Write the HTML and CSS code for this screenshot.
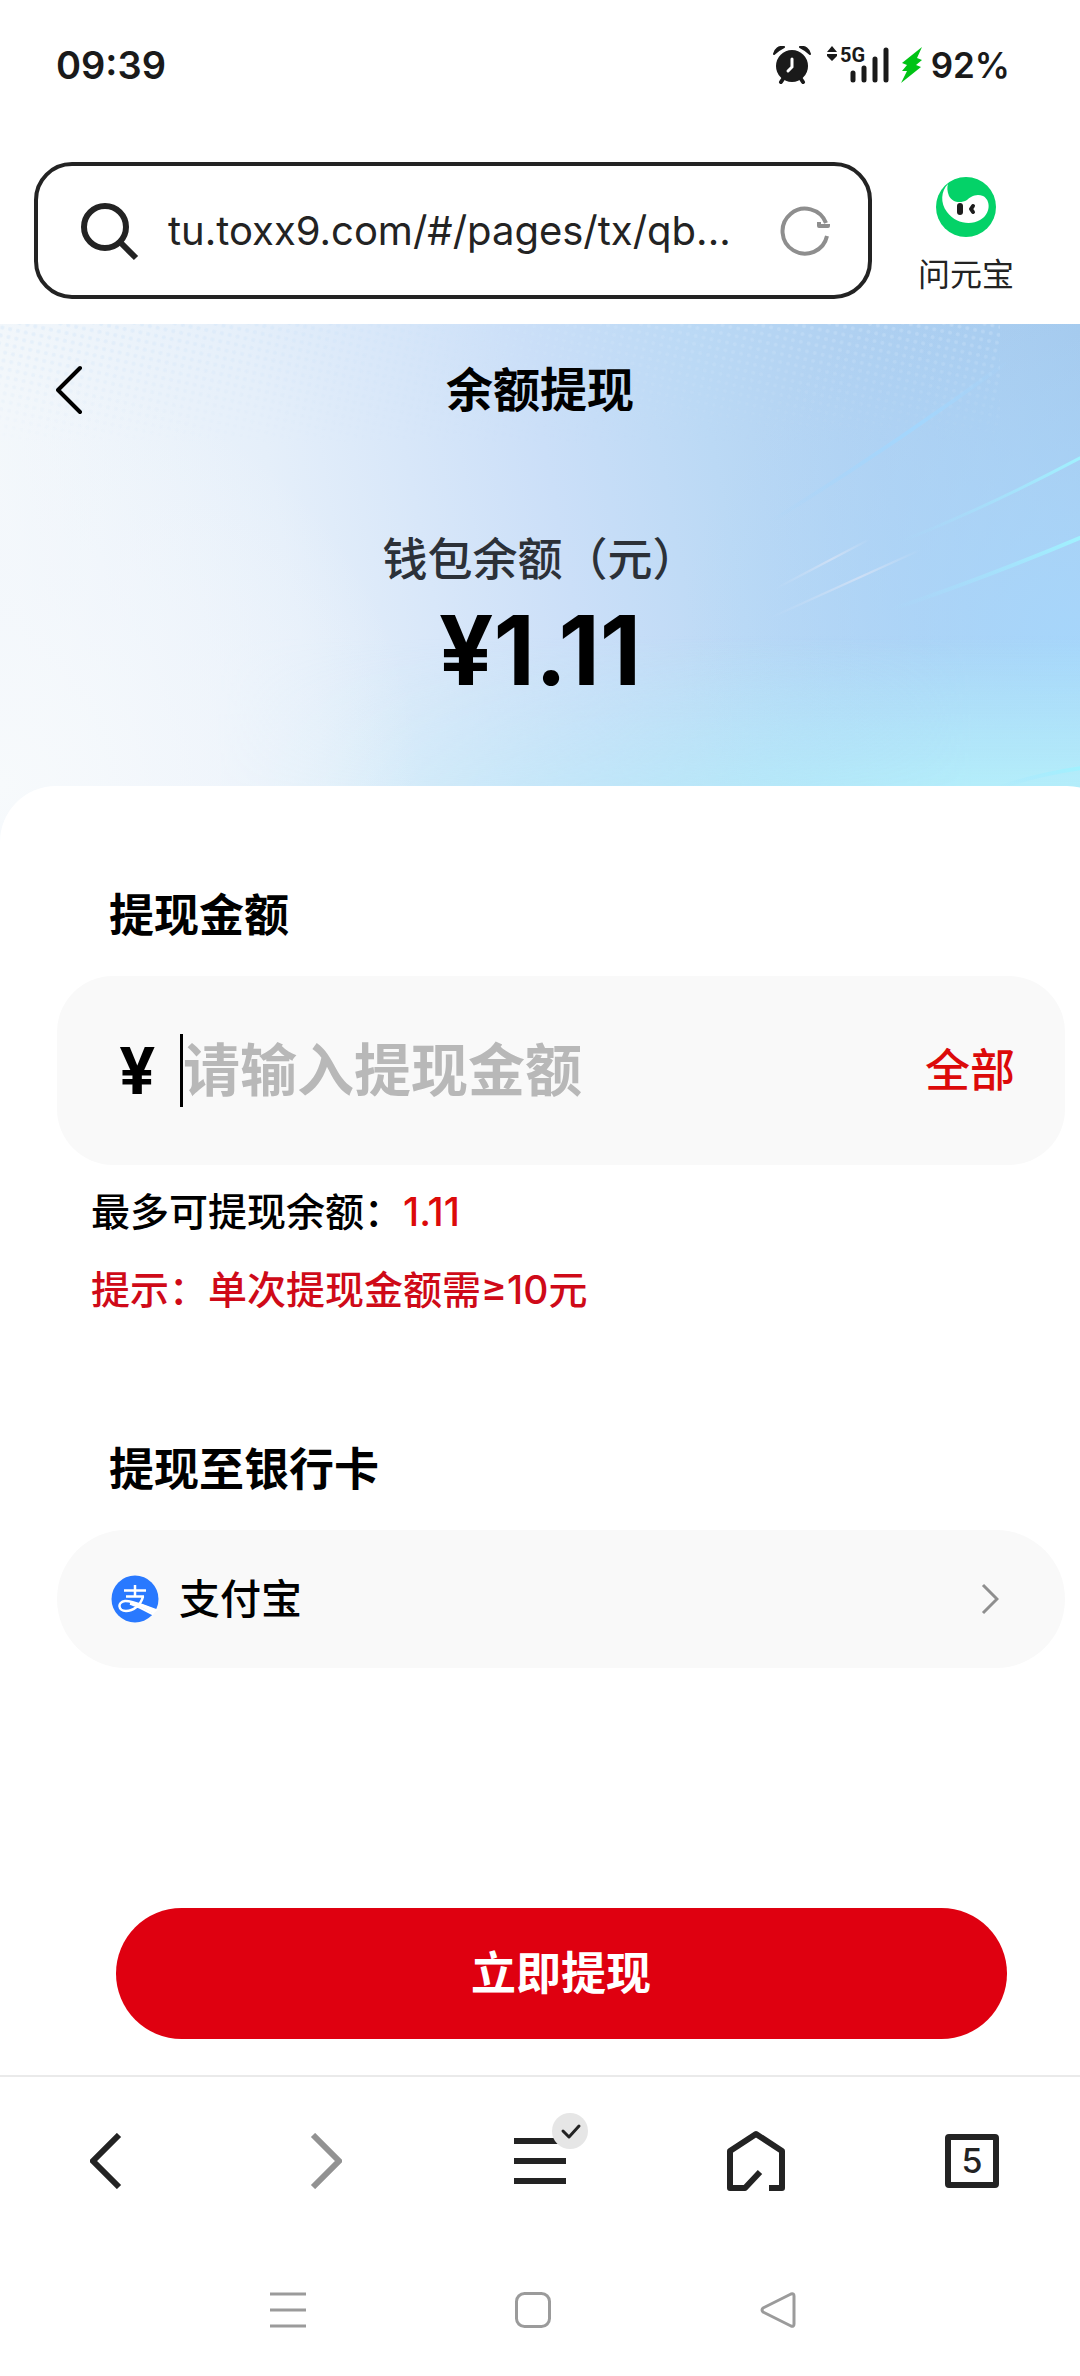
FILE: index.html
```
<!DOCTYPE html>
<html lang="zh-CN">
<head>
    <meta charset="UTF-8">
    <meta name="viewport" content="width=device-width, initial-scale=1.0">
    <title>余额提现</title>
    <link rel="stylesheet" href="styles.css">
</head>
<body>
    <div class="status-bar">
        <span class="time">09:39</span>
        <div class="status-icons">
            <svg class="alarm" width="38" height="38" viewBox="0 0 38 38">
                <circle cx="19" cy="20" r="16" fill="#1a1a1a"/>
                <path d="M1 8C2 3 6 0 11 1C7 3 4 5 1 8ZM37 8C36 3 32 0 27 1C31 3 34 5 37 8Z" fill="#1a1a1a" stroke="#1a1a1a" stroke-width="2" stroke-linejoin="round"/>
                <path d="M10 33L8 36M28 33L30 36" stroke="#1a1a1a" stroke-width="4" stroke-linecap="round"/>
                <path d="M19 13V21L15 25" fill="none" stroke="#fff" stroke-width="3" stroke-linecap="round"/>
            </svg>
            <svg class="signal" width="62" height="46" viewBox="0 -4 62 46">
                <path d="M0 6L5 0L10 6ZM0 8H10V10L5 15L0 10Z" fill="#1a1a1a"/>
                <text x="13" y="16" class="signal-text">5G</text>
                <path d="M26 27V34M37 22V34M48 13V34M59 4V34" stroke="#1a1a1a" stroke-width="5" stroke-linecap="round"/>
            </svg>
            <svg class="bolt" width="22" height="36" viewBox="0 0 22 36">
                <path d="M21 0L1 16L6 18L1 24H6L0 36L20 20L15 18L21 13L16 11Z" fill="#00c315"/>
            </svg>
            <span class="battery">92%</span>
        </div>
    </div>

    <div class="address-row">
        <div class="address-box">
            <svg width="60" height="60" viewBox="0 0 60 60" fill="none" stroke="#232323" stroke-width="6">
                <circle cx="25" cy="26" r="21"/>
                <path d="M40 41L56 57"/>
            </svg>
            <a class="url" href="#">tu.toxx9.com/#/pages/tx/qb...</a>
            <button class="icon-button" type="button" aria-label="刷新">
                <svg width="50" height="50" viewBox="0 0 50 50" fill="none" stroke="#8e8e8e" stroke-width="4">
                    <path d="M47 30A22.500 22.500 0 1 1 46 17"/>
                    <path d="M48 18V20H39V16" stroke-linejoin="round"/>
                </svg>
            </button>
        </div>
        <a class="assistant" href="#">
            <svg width="60" height="60" viewBox="0 0 60 60">
                <circle cx="30" cy="30" r="30" fill="#04d268"/>
                <path d="M12 7C5 14 4 26 11 35C19 46 34 49 44 43C55 37 55 23 47 19C40 16 34 20 31 23C24 27 16 25 13 19C11 14 11 10 12 7Z" fill="#fff"/>
                <rect x="21" y="26" width="6" height="12" rx="3" fill="#1d1d1d"/>
                <path d="M37 29L35 32L37 35" fill="none" stroke="#1d1d1d" stroke-width="4" stroke-linecap="round" stroke-linejoin="round"/>
            </svg>
            <span>问元宝</span>
        </a>
    </div>

    <main class="page">
        <svg class="page-bg" viewBox="0 0 1080 520" preserveAspectRatio="none">
            <defs>
                <linearGradient id="base" gradientUnits="userSpaceOnUse" x1="0" y1="200" x2="1080" y2="0">
                    <stop offset="0" stop-color="#f4f8fb"/>
                    <stop offset="0.25" stop-color="#e5effa"/>
                    <stop offset="0.5" stop-color="#cbdff8"/>
                    <stop offset="0.65" stop-color="#bbd9f5"/>
                    <stop offset="0.8" stop-color="#afd0f1"/>
                    <stop offset="1" stop-color="#a3c8ec"/>
                </linearGradient>
                <linearGradient id="cyan" x1="0" y1="0" x2="0" y2="1">
                    <stop offset="0.6" stop-color="#b4eefa" stop-opacity="0"/>
                    <stop offset="0.9" stop-color="#b4eefa"/>
                </linearGradient>
                <linearGradient id="cyan-side" x1="0" y1="0" x2="1" y2="0">
                    <stop offset="0.2" stop-color="#fff" stop-opacity="0"/>
                    <stop offset="0.5" stop-color="#fff" stop-opacity="0.4"/>
                    <stop offset="0.9" stop-color="#fff"/>
                </linearGradient>
                <mask id="cyan-mask">
                    <rect width="1080" height="520" fill="url(#cyan-side)"/>
                </mask>
                <radialGradient id="blue" gradientUnits="userSpaceOnUse" cx="1080" cy="330" r="400">
                    <stop offset="0" stop-color="#a6d6fb"/>
                    <stop offset="1" stop-color="#b0d8fb" stop-opacity="0"/>
                </radialGradient>
                <radialGradient id="pale" gradientUnits="userSpaceOnUse" cx="0" cy="460" r="420">
                    <stop offset="0" stop-color="#f7fafc"/>
                    <stop offset="0.5" stop-color="#f3f7fc" stop-opacity="0.6"/>
                    <stop offset="1" stop-color="#f3f7fc" stop-opacity="0"/>
                </radialGradient>
                <linearGradient id="ray" x1="0" y1="1" x2="1" y2="0">
                    <stop offset="0" stop-color="#a4e4ff" stop-opacity="0"/>
                    <stop offset="1" stop-color="#a0f2ff"/>
                </linearGradient>
                <linearGradient id="ray-mid" x1="0" y1="1" x2="1" y2="0">
                    <stop offset="0" stop-color="#a3d6fd" stop-opacity="0"/>
                    <stop offset="0.6" stop-color="#a3d6fd"/>
                    <stop offset="1" stop-color="#a3d6fd" stop-opacity="0"/>
                </linearGradient>
                <linearGradient id="ray-white" x1="0" y1="1" x2="1" y2="0">
                    <stop offset="0" stop-color="#cddff5" stop-opacity="0"/>
                    <stop offset="0.6" stop-color="#cddff5"/>
                    <stop offset="1" stop-color="#cddff5" stop-opacity="0"/>
                </linearGradient>
                <pattern id="dots" width="8" height="8" patternUnits="userSpaceOnUse" patternTransform="rotate(12)">
                    <circle cx="3" cy="3" r="2" fill="#cfe4f9"/>
                </pattern>
                <linearGradient id="fade" x1="0" y1="0" x2="0" y2="1">
                    <stop offset="0" stop-color="#fff" stop-opacity="0.4"/>
                    <stop offset="1" stop-color="#fff" stop-opacity="0"/>
                </linearGradient>
                <mask id="dots-mask">
                    <rect width="1000" height="120" fill="url(#fade)"/>
                </mask>
            </defs>
            <rect width="1080" height="520" fill="url(#base)"/>
            <rect width="1080" height="520" fill="url(#blue)"/>
            <rect width="1080" height="520" fill="url(#cyan)" mask="url(#cyan-mask)"/>
            <rect width="1080" height="520" fill="url(#pale)"/>
            <rect width="1080" height="160" fill="url(#dots)" mask="url(#dots-mask)"/>
            <g fill="none">
                <path d="M770 198Q890 124 1010 36" stroke="url(#ray-mid)" stroke-width="4"/>
                <path d="M900 218Q990 182 1082 133" stroke="url(#ray)" stroke-width="3"/>
                <path d="M890 286Q990 252 1082 213" stroke="url(#ray)" stroke-width="4"/>
                <path d="M1000 463Q1040 450 1082 444" stroke="url(#ray)" stroke-width="4"/>
                <path d="M775 265L870 215" stroke="url(#ray-white)" stroke-width="2"/>
                <path d="M770 294L920 226" stroke="url(#ray-white)" stroke-width="2"/>
            </g>
        </svg>

        <header class="title-bar">
            <a class="back" href="#" aria-label="返回">
                <svg width="28" height="50" viewBox="0 0 28 50" fill="none" stroke="#000" stroke-width="4" stroke-linecap="round" stroke-linejoin="round">
                    <path d="M24 3L2 25L24 47"/>
                </svg>
            </a>
            <h1>余额提现</h1>
        </header>

        <section class="balance">
            <p class="balance-label">钱包余额（元）</p>
            <p class="balance-value">¥1.11</p>
        </section>

        <form class="card">
            <h2><label for="amount">提现金额</label></h2>
            <div class="field amount-field">
                <span class="currency">¥</span>
                <input id="amount" type="text" inputmode="decimal" placeholder="请输入提现金额">
                <button class="all-button" type="button">全部</button>
            </div>
            <div class="hints">
                <p>最多可提现余额：<span class="max">1.11</span></p>
                <p class="warning">提示：单次提现金额需≥10元</p>
            </div>

            <h2>提现至银行卡</h2>
            <button class="field account-field" type="button">
                <svg width="48" height="48" viewBox="0 0 48 48">
                    <circle cx="24" cy="24" r="23.500" fill="#2979ff"/>
                    <path d="M13 15.500H35M24 10V21.500M15 21.500H33" fill="none" stroke="#fff" stroke-width="2.500"/>
                    <path d="M32 21.500C30 30 22 36 15 36C7 36 6 27 14 26C23 25.500 32 32 48 37L44 40C34 36 28 31 19 28.500" fill="none" stroke="#fff" stroke-width="2.500"/>
                    <path d="M29 28L48 35L43 39L28 31Z" fill="#fff"/>
                    <path d="M43 38L48 34V42H41Z" fill="#f9f9f9"/>
                </svg>
                <span class="account-name">支付宝</span>
                <svg width="18" height="32" viewBox="0 0 18 32" fill="none" stroke="#8f8f8f" stroke-width="3">
                    <path d="M2 2L16 16L2 30"/>
                </svg>
            </button>

            <button class="submit" type="submit">立即提现</button>
        </form>
    </main>

    <nav class="browser-nav">
        <a href="#" aria-label="后退">
            <svg width="36" height="56" viewBox="0 0 36 56" fill="none" stroke="#232323" stroke-width="6">
                <path d="M29 2L3 28L29 54"/>
            </svg>
        </a>
        <a href="#" aria-label="前进">
            <svg width="36" height="56" viewBox="0 0 36 56" fill="none" stroke="#929292" stroke-width="6">
                <path d="M7 2L33 28L7 54"/>
            </svg>
        </a>
        <a href="#" aria-label="菜单">
            <span class="menu-icon">
                <svg width="52" height="46" viewBox="0 0 52 46" stroke="#232323" stroke-width="6">
                    <path d="M0 3H52M0 23H52M0 43H52"/>
                </svg>
                <svg class="badge" width="36" height="36" viewBox="0 0 36 36">
                    <circle cx="18" cy="18" r="18" fill="#e6e6e6"/>
                    <path d="M11 18L17 24L27 13" fill="none" stroke="#232323" stroke-width="3" stroke-linecap="round" stroke-linejoin="round"/>
                </svg>
            </span>
        </a>
        <a href="#" aria-label="主页">
            <svg width="58" height="62" viewBox="0 0 58 62" fill="none" stroke="#232323" stroke-width="6" stroke-linejoin="round">
                <path d="M42 58H55V21L29 4L3 21V58H18L33 42"/>
            </svg>
        </a>
        <a href="#" aria-label="标签页">
            <span class="tab-count">5</span>
        </a>
    </nav>

    <div class="system-bar">
        <button class="icon-button" type="button" aria-label="最近任务">
            <svg width="36" height="36" viewBox="0 0 36 36" stroke="#9b9b9b" stroke-width="3">
                <path d="M0 2H36M0 18H36M0 34H36"/>
            </svg>
        </button>
        <button class="icon-button" type="button" aria-label="桌面">
            <svg width="36" height="36" viewBox="0 0 36 36" fill="none" stroke="#9b9b9b" stroke-width="3">
                <rect x="1.500" y="1.500" width="33" height="33" rx="8"/>
            </svg>
        </button>
        <button class="icon-button" type="button" aria-label="返回">
            <svg width="36" height="36" viewBox="0 0 36 36" fill="none" stroke="#9b9b9b" stroke-width="3" stroke-linejoin="round">
                <path d="M31 2L3 16Q1 18 3 20L31 34Q34 35 34 32V4Q34 1 31 2Z"/>
            </svg>
        </button>
    </div>
</body>
</html>
```

FILE: styles.css
```
* {
    box-sizing: border-box;
}
body {
    margin: 0;
    background: #fff;
    color: #000;
    font-family: Inter, "Noto Sans CJK SC", sans-serif;
    overflow-x: hidden;
}
h1, h2, p {
    margin: 0;
}
a {
    color: inherit;
    text-decoration: none;
}
button, input {
    border: 0;
    padding: 0;
    background: none;
    color: inherit;
    font-family: inherit;
}
svg {
    display: block;
    flex-shrink: 0;
}
.icon-button {
    display: block;
}

/* status bar */
.status-bar {
    display: flex;
    justify-content: space-between;
    align-items: center;
    height: 130px;
    padding: 0 70px 0 56px;
    color: #1a1a1a;
}
.time {
    font-size: 38px;
    font-weight: 600;
}
.status-icons {
    display: flex;
    align-items: center;
}
.signal {
    margin-left: 16px;
}
.signal-text {
    font-family: Roboto, sans-serif;
    font-size: 20px;
    font-weight: 700;
    fill: #1a1a1a;
}
.bolt {
    margin: 0 8px 0 12px;
}
.battery {
    font-size: 35px;
    font-weight: 600;
}

/* address row */
.address-row {
    display: flex;
    align-items: center;
    padding: 32px 20px 25px 34px;
}
.address-box {
    display: flex;
    flex: 1;
    align-items: center;
    height: 137px;
    padding: 0 38px 0 42px;
    border: 4px solid #232323;
    border-radius: 38px;
}
.url {
    flex: 1;
    margin-left: 28px;
    font-size: 40px;
    color: #232323;
    white-space: nowrap;
}
.assistant {
    display: flex;
    flex-direction: column;
    align-items: center;
    width: 188px;
    padding-top: 14px;
    font-size: 32px;
    line-height: 48px;
    color: #232323;
}
.assistant svg {
    margin-bottom: 14px;
}

/* page */
.page {
    position: relative;
    overflow: hidden;
}
.page-bg {
    position: absolute;
    top: 0;
    left: 0;
    z-index: -1;
    width: 100%;
    height: 520px;
}
.title-bar {
    display: grid;
    grid-template-columns: 1fr auto 1fr;
    align-items: center;
    height: 132px;
    padding: 0 56px;
}
.title-bar h1 {
    font-size: 47px;
    font-weight: 700;
    line-height: 60px;
}
.back {
    justify-self: start;
}
.balance {
    padding: 74px 0 86px;
    text-align: center;
}
.balance-label {
    font-size: 45px;
    font-weight: 500;
    line-height: 60px;
    color: #2c3138;
}
.balance-value {
    margin-top: 10px;
    font-size: 96px;
    font-weight: 700;
    line-height: 100px;
}

/* card runs past the right edge of the screen */
.card {
    width: calc(100% + 43px);
    padding: 100px 58px 36px 57px;
    border-radius: 56px 56px 0 0;
    background: #fff;
}
.card h2 {
    padding-left: 52px;
    font-size: 45px;
    font-weight: 700;
    line-height: 60px;
}
.field {
    display: flex;
    align-items: center;
    width: 100%;
    margin-top: 30px;
    background: #f9f9f9;
}
.amount-field {
    height: 189px;
    padding: 0 50px 0 62px;
    border-radius: 56px;
}
.currency {
    width: 61px;
    font-size: 64px;
    font-weight: 700;
    line-height: 72px;
}
.amount-field input {
    flex: 1;
    min-width: 0;
    height: 73px;
    border-left: 3px solid #000;
    font-size: 57px;
    font-weight: 700;
    line-height: 72px;
    outline: 0;
}
.amount-field input::placeholder {
    color: #b8b8b8;
}
.all-button {
    font-size: 45px;
    font-weight: 500;
    line-height: 60px;
    color: #dc0a0a;
}
.hints {
    margin: 8px 0 111px;
    padding-left: 34px;
    font-size: 39px;
    font-weight: 500;
    line-height: 78px;
}
.max {
    color: #dc0a0a;
}
.warning {
    color: #cf0a18;
}
.account-field {
    height: 138px;
    padding: 0 66px 0 54px;
    border-radius: 69px;
}
.account-name {
    flex: 1;
    margin-left: 20px;
    font-size: 41px;
    font-weight: 500;
    line-height: 60px;
    text-align: left;
}
.submit {
    display: block;
    width: calc(100% - 117px);
    height: 131px;
    margin: 240px auto 0;
    border-radius: 66px;
    background: #df0010;
    color: #fff;
    font-size: 45px;
    font-weight: 700;
    line-height: 60px;
}

/* browser nav */
.browser-nav {
    display: grid;
    grid-template-columns: repeat(5, 1fr);
    place-items: center;
    height: 169px;
    border-top: 2px solid #eaeaea;
}
.menu-icon {
    display: block;
    position: relative;
}
.badge {
    position: absolute;
    top: -25px;
    right: -22px;
}
.tab-count {
    display: flex;
    justify-content: center;
    align-items: center;
    width: 54px;
    height: 54px;
    border: 6px solid #232323;
    border-radius: 4px;
    font-size: 34px;
    font-weight: 500;
    color: #232323;
}

/* system bar */
.system-bar {
    display: flex;
    justify-content: center;
    align-items: center;
    gap: 209px;
    height: 132px;
    padding-right: 14px;
}
```
